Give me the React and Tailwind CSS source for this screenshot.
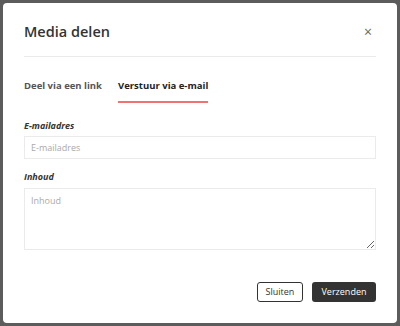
export default function App() {
  return (
    <div className="w-[400px] h-[326px] bg-[#5c5c5c] p-[3px]" style={{ fontFamily: '"Open Sans", sans-serif' }}>
      <div className="w-full h-full bg-white rounded-[4px] px-[21px] flex flex-col">
        <div className="flex items-center justify-between h-[54px] pt-[5px] border-b border-[#ebebeb]">
          <h2 className="text-[14.5px] font-semibold text-[#333] leading-none">Media delen</h2>
          <button className="text-[#666] text-[14px] leading-none mr-[4px]">×</button>
        </div>
        <div className="flex gap-[16px] mt-[22px] text-[9.5px] leading-[13px] font-bold">
          <div className="text-[#555] pb-[9px]">Deel via een link</div>
          <div className="text-[#222] pb-[9px] border-b-2 border-[#f27272]">Verstuur via e-mail</div>
        </div>
        <label className="mt-[17px] text-[9px] leading-[12px] font-bold italic text-[#333]">E-mailadres</label>
        <input
          placeholder="E-mailadres"
          className="mt-[4px] h-[23px] border border-[#ebebeb] px-[6px] text-[9px] text-[#333] placeholder:text-[#aaa] outline-none"
        />
        <label className="mt-[12px] text-[9px] leading-[12px] font-bold italic text-[#333]">Inhoud</label>
        <textarea
          placeholder="Inhoud"
          className="mt-[5px] h-[62px] border border-[#ebebeb] px-[6px] py-[6px] text-[9px] leading-[12px] text-[#333] placeholder:text-[#aaa] outline-none"
        />
        <div className="flex justify-end gap-[9px] mt-[32px]">
          <button className="h-[20px] w-[46px] border border-[#333] rounded-[3px] text-[9px] text-[#333]">Sluiten</button>
          <button className="h-[20px] w-[64px] bg-[#333] rounded-[3px] text-[9px] text-white">Verzenden</button>
        </div>
      </div>
    </div>
  );
}
